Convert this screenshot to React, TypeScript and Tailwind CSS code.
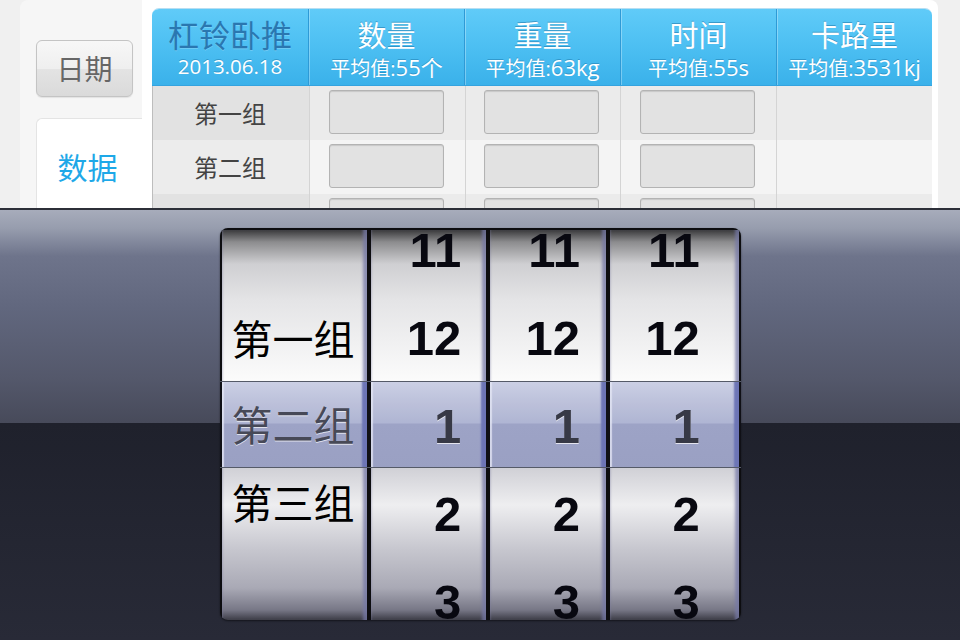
import React from 'react';

const cjk = "font-['Noto_Sans_CJK_SC','Noto_Sans',sans-serif]";
const latin = "font-['Open_Sans','Noto_Sans_CJK_SC',sans-serif]";

const columns = [
    { title: '数量', value: '55个', box: true },
    { title: '重量', value: '63kg', box: true },
    { title: '时间', value: '55s', box: true },
    { title: '卡路里', value: '3531kj', box: false },
];

const rows = ['第一组', '第二组', ''];

const wheels = [
    { width: 'w-[115px]' },
    { width: 'w-[116px]' },
    { width: 'w-[130px]' },
];

const numbers = ['11', '12', '1', '2', '3'];

const wheelBg =
    'bg-[linear-gradient(to_bottom,#3a3a3c_0px,#8c8c8e_12px,#cfcfd2_34px,#e4e4e6_70px,#fbfbfb_150px,#fbfbfb_236px,#d0d0d6_238px,#eeeef0_275px,#c6c6ce_320px,#a9a9b5_358px,#777786_380px,#3c3c46_390px)]';

const wheelEdge = 'shadow-[inset_-6px_0_3px_-2px_rgba(118,120,165,0.75),inset_2px_0_2px_-1px_rgba(120,122,160,0.35)]';

// blue glass band drawn inside each wheel, under its text
const Band = () => (
    <div className="absolute left-0 right-0 top-[151px] h-[87px] bg-[linear-gradient(to_bottom,#d3d7ea_0px,#c4c9e0_20px,#b5bbd8_42px,#a2a8ca_43px,#9fa5c7_87px)] shadow-[inset_-6px_0_2px_-1px_#6f78b9,inset_3px_0_1px_-1px_rgba(235,238,250,0.8)]" />
);

const App = () => {
    return (
        <div className="w-[960px] h-[640px] overflow-hidden flex flex-col">
            {/* Table area */}
            <div className="h-[208px] flex bg-[#f0f0f0] pl-[20px] overflow-hidden shrink-0">
                <div className="w-[122px] flex flex-col bg-[#f6f6f6] rounded-tl-[8px]">
                    <div className="h-[118px] pt-[40px] pl-[16px]">
                        <div className={`w-[97px] h-[57px] rounded-[6px] border border-[#c4c4c4] bg-[linear-gradient(to_bottom,#f7f7f7,#efefef_50%,#e3e3e3_52%,#dadada)] shadow-[0_1px_1px_rgba(0,0,0,0.08)] flex items-center justify-center pb-[2px] text-[28px] leading-[28px] text-[#666] ${cjk}`}>
                            日期
                        </div>
                    </div>
                    <div className={`flex-1 ml-[16px] bg-white rounded-tl-[6px] border-l border-t border-[#e4e4e4] flex justify-center pt-[32px] pr-[4px] text-[30px] leading-[30px] text-[#1ea8e8] ${cjk}`}>
                        数据
                    </div>
                </div>
                <div className="w-[796px] bg-white rounded-tr-[8px] pl-[10px] pt-[8px] pr-[6px]">
                    <div className="w-[780px] rounded-t-[7px] overflow-hidden border-t border-[#b7def2]">
                        {/* Header */}
                        <div className="grid grid-cols-5 h-[77px] bg-[linear-gradient(to_bottom,#60cbf8,#4cbff2_50%,#3ab1ea)] border-b border-[#34a3df]">
                            <div className="flex flex-col items-center pt-[8px]">
                                <span className={`text-[31px] leading-[34px] text-[#2a77b0] [text-shadow:0_1px_0_rgba(255,255,255,0.2)] ${cjk}`}>杠铃卧推</span>
                                <span className={`mt-[4px] text-[20.5px] leading-[22px] text-white [text-shadow:0_-1px_0_rgba(0,70,120,0.3)] ${latin}`}>2013.06.18</span>
                            </div>
                            {columns.map((c) => (
                                <div key={c.title} className="flex flex-col items-center pt-[9px] border-l border-[#2e9ad6] shadow-[inset_1px_0_0_rgba(255,255,255,0.3)]">
                                    <span className={`text-[29px] leading-[32px] text-white [text-shadow:0_-1px_0_rgba(0,70,120,0.35)] ${cjk}`}>{c.title}</span>
                                    <span className={`mt-[5px] flex items-baseline leading-[24px] text-white [text-shadow:0_-1px_0_rgba(0,70,120,0.3)] ${latin}`}>
                                        <span className="text-[20px]">平均值:</span>
                                        <span className="text-[22px]">{c.value}</span>
                                    </span>
                                </div>
                            ))}
                        </div>
                        {/* Rows */}
                        {rows.map((r, i) => (
                            <div key={i} className={`grid grid-cols-5 h-[54px] border-l border-[#bdbdbd] ${i % 2 === 0 ? 'bg-[#ebebeb]' : 'bg-[#f4f4f4]'}`}>
                                <div className={`flex items-center justify-center pr-[2px] text-[24px] text-[#444] ${cjk} ${i % 2 === 0 ? 'bg-[#e2e2e2]' : 'bg-[#ececec]'}`}>
                                    {r}
                                </div>
                                {columns.map((c) => (
                                    <div key={c.title} className="flex items-start justify-center pt-[4px] pr-[2px] border-l border-[#d4d4d4]">
                                        {c.box && (
                                            <div className="w-[115px] h-[44px] rounded-[3px] border border-[#b3b3b3] bg-[#e2e2e2] shadow-[inset_0_1px_1px_rgba(0,0,0,0.12)]" />
                                        )}
                                    </div>
                                ))}
                            </div>
                        ))}
                    </div>
                </div>
            </div>

            {/* Picker area */}
            <div className="relative flex-1 flex justify-center pt-[20px] bg-[linear-gradient(to_bottom,#2c2f38_0px,#2c2f38_2px,#a7acbb_2px,#979dae_20px,#6e748b_48px,#61677e_100px,#54586b_170px,#474a5a_215px,#1f212c_215px,#282a37_432px)]">
                <div className="relative w-[521px] h-[392px] rounded-[8px] overflow-hidden bg-[#0d0d10] pt-[2px] pl-[2px] pr-[1px] flex gap-[4px] shadow-[0_1px_2px_rgba(0,0,0,0.5)]">
                    {/* Label wheel */}
                    <div className={`relative w-[146px] h-[390px] overflow-hidden ${wheelBg} ${wheelEdge} pl-[10px] ${cjk} text-[41px] leading-[40px] text-black`}>
                        <Band />
                        <div className="relative mt-[87px]">第一组</div>
                        <div className="relative mt-[46px] text-[#474955] [text-shadow:0_1px_0_rgba(255,255,255,0.75)]">第二组</div>
                        <div className="relative mt-[38px]">第三组</div>
                    </div>
                    {wheels.map((w, wi) => (
                        <div key={wi} className={`relative ${w.width} h-[390px] overflow-hidden ${wheelBg} ${wheelEdge}`}>
                            <Band />
                            <div className="relative mt-[-24px]">
                                {numbers.map((n) => (
                                    <div
                                        key={n}
                                        className={`w-[90px] h-[88px] text-right text-[49px] leading-[88px] font-bold font-['Liberation_Sans',Arial,sans-serif] ${n === '1' ? 'text-[#363843] [text-shadow:0_1px_0_rgba(255,255,255,0.8)]' : 'text-[#080810]'}`}
                                    >
                                        {n}
                                    </div>
                                ))}
                            </div>
                        </div>
                    ))}

                    {/* Selection bar edges */}
                    <div className="absolute left-0 right-0 top-[153px] h-[87px] border-t border-b border-[#555a68] bg-[rgba(70,80,140,0.05)]" />
                </div>
            </div>
        </div>
    );
};

export default App;
